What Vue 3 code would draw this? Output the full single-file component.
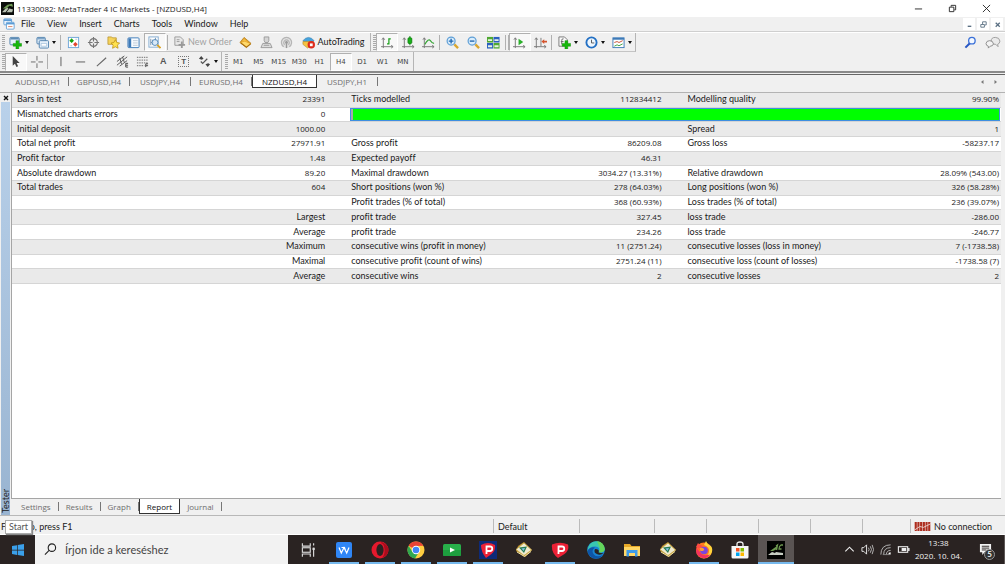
<script setup>
const glyphs = {
  app: '<rect width="14" height="14" fill="#0b0d0b"/><path d="M1 11 6 6 8 7 5 11zM6 11 9 7 13 8 12 11z" fill="#b9c2b4"/><path d="M2 7 7 3 12 2 13 5 9 4 6 7z" fill="#6f9a55"/>',
  doc: '<rect x="1" y="1" width="9" height="7" rx="1" fill="#e9f3fc" stroke="#5b9bd5"/><path d="M1 2.500H10" stroke="#5b9bd5" stroke-width="2"/><rect x="4" y="5" width="9" height="8" rx="1" fill="#fff" stroke="#5b9bd5"/><path d="M4 6.500H13" stroke="#5b9bd5" stroke-width="2"/><path d="M6 10h5" stroke="#d57a5b"/>',
  newChart: '<rect x="1" y="1.500" width="10" height="8" rx="1" fill="#e6f1fb" stroke="#4f81ad"/><path d="M1.500 3H10.500" stroke="#4f81ad" stroke-width="1.500"/><path d="M7.500 5h3v3h3v3h-3v3h-3v-3h-3V8h3z" fill="#16b80b" stroke="#0a8c05" stroke-width=".5"/>',
  profiles: '<rect x="1" y="1.500" width="9" height="7" rx="1" fill="#dcebf8" stroke="#4f81ad"/><path d="M1.500 3H9.500" stroke="#4f81ad"/><rect x="3.500" y="5" width="10" height="8" rx="1" fill="#e6f1fb" stroke="#4f81ad"/><path d="M5.500 8h6V11h-6z" fill="#fff" stroke="#8fb3d3" stroke-width=".7"/>',
  market: '<rect x="1.500" y="1.500" width="11" height="11" fill="#fff" stroke="#6ea6d8"/><path d="M2.500 5 5 2.500l2.500 2.500L5 7.500z" fill="#12a30c"/><path d="M6.500 9 9 6.500 11.500 9 9 11.500z" fill="#e2462e"/><path d="M9 3.500h2M3.500 10.500h2" stroke="#b9c7d2"/>',
  target: '<circle cx="7" cy="7" r="4.200" fill="none" stroke="#777" stroke-width="1.200"/><path d="M7 1V6M7 8v5M1 7h5M8 7h5" stroke="#777" stroke-width="1.200"/>',
  folderStar: '<path d="M1 3V1h4l1 1h4v7H1z" fill="#f5d35c" stroke="#b7912a" stroke-width=".8"/><path d="m9 4 1.600 3 3 .5-2.300 2.300.6 3.400L9 11.600 6 13.200l.6-3.400L4.400 7.500l3-.5z" fill="#ffe14d" stroke="#b98c12" stroke-width=".8"/>',
  navigator: '<rect x="1" y="2" width="12" height="10.500" rx="1" fill="#f7fbff" stroke="#3d7ab8"/><rect x="1.500" y="2.500" width="3" height="9.500" fill="#3d7ab8"/><path d="M6.500 5h5M6.500 7.500h5M6.500 10h5" stroke="#b9c6d4"/>',
  tester: '<rect x="1" y="1" width="10" height="11" fill="#fff" stroke="#7fa8cf"/><path d="M3 3v7M5 4v5M3 7h3M8 2v3" stroke="#7590ab"/><circle cx="7.500" cy="7" r="3.200" fill="#cfe4f6" fill-opacity=".8" stroke="#5289bb"/><path d="m10 9.500 3.500 3.500" stroke="#dba123" stroke-width="2"/>',
  order: '<path d="M2 1h6l3 3v6H2z" fill="#e8e8e8" stroke="#999"/><path d="M4 4h3M4 6h3" stroke="#999"/><path d="M8.500 6h2v2.500H13v2h-2.500V13h-2v-2.500H6v-2h2.500z" fill="#999"/>',
  gold: '<path d="M1 7 5.500 1.500 13 8 8 12.500z" fill="#e3a228" stroke="#b27912" stroke-width=".8"/><path d="M1.500 7.500 6 6l6.500 2.500-4.500 3.500z" fill="#ffd96b"/><path d="m2 7.500 6 4.500 4.500-3.500" fill="none" stroke="#a86c0c" stroke-width="1.200"/><path d="M3 6 5.500 3 10 7 6 5.500z" fill="#f3bd45"/>',
  stamp: '<path d="M4.500 1h5v4l-1 2h-3l-1-2z" fill="#d5d5d5" stroke="#999"/><path d="M1 12.500 3 8h8l2 4.500z" fill="#ddd" stroke="#999"/><path d="M4 10h6" stroke="#999"/>',
  signal: '<circle cx="7" cy="7" r="6" fill="#e2e2e2"/><path d="M4 11.500a5.500 5.500 0 1 1 6 0M5 9.500a3 3 0 1 1 4 0" fill="none" stroke="#b5b5b5" stroke-width="1.300"/><circle cx="7" cy="7" r="1.500" fill="#999"/><path d="M7 8v5" stroke="#999" stroke-width="1.500"/>',
  auto: '<path d="M1 5q6-7 12 0l-2 2H3z" fill="#46a3dc" stroke="#2a78ae" stroke-width=".6"/><path d="M1 6h11v3l-6 4-5-4z" fill="#f5c342" stroke="#b4841d" stroke-width=".6"/><circle cx="10" cy="9.500" r="4" fill="#dd2b1c"/><rect x="8.500" y="8" width="3" height="3" fill="#fff"/>',
  bars: '<path d="M2.500 2v11M0 11.500h13" stroke="#777"/><path d="m1 4 1.500-2L4 4M11 10l2 1.500L11 13" fill="none" stroke="#777"/><path d="M6.500 8.500H8.500V3h2" fill="none" stroke="#18a018" stroke-width="1.300"/>',
  candle: '<path d="M2.500 2v11M0 11.500h13" stroke="#777"/><path d="m1 4 1.500-2L4 4M11 10l2 1.500L11 13" fill="none" stroke="#777"/><path d="M8.500 0v10" stroke="#0d850d"/><rect x="6.500" y="2" width="4" height="6" rx="1" fill="#17b117" stroke="#0d850d"/>',
  line: '<path d="M2.500 2v11M0 11.500h13" stroke="#777"/><path d="m1 4 1.500-2L4 4M11 10l2 1.500L11 13" fill="none" stroke="#777"/><path d="M3 9Q7 2 9 5t4 3" fill="none" stroke="#36a536" stroke-width="1.200"/>',
  zoomIn: '<path d="m9 9 4 4" stroke="#d9a62e" stroke-width="2.500"/><circle cx="5.500" cy="5.500" r="4.300" fill="#d9edfc" stroke="#5f9fd6" stroke-width="1.300"/><path d="M3 5.500h5M5.500 3v5" stroke="#2269b1" stroke-width="1.500"/>',
  zoomOut: '<path d="m9 9 4 4" stroke="#d9a62e" stroke-width="2.500"/><circle cx="5.500" cy="5.500" r="4.300" fill="#d9edfc" stroke="#5f9fd6" stroke-width="1.300"/><path d="M3 5.500h5" stroke="#2269b1" stroke-width="1.500"/>',
  tile: '<rect x="0" y="1" width="6.500" height="6" fill="#4fa832"/><rect x="7" y="1" width="6.500" height="6" fill="#2a5fc0"/><rect x="0" y="7.500" width="6.500" height="6" fill="#2a5fc0"/><rect x="7" y="7.500" width="6.500" height="6" fill="#4fa832"/><path d="M1 4.500h4.500M8 4.500h4.500M1 11h4.500M8 11h4.500" stroke="#e6f3e2" stroke-width="2"/>',
  scroll: '<path d="M2.500 2v11M0 11.500h13" stroke="#777"/><path d="m1 4 1.500-2L4 4M11 10l2 1.500L11 13" fill="none" stroke="#777"/><path d="m6 3 5 3.500L6 10z" fill="#2bb02b"/>',
  shift: '<path d="M2.500 2v11M0 11.500h13M7.500 2v9" stroke="#777"/><path d="m1 4 1.500-2L4 4M11 10l2 1.500L11 13" fill="none" stroke="#777"/><path d="m8 6 3-2.500V5h3v2h-3v1.500z" fill="#d4532c"/>',
  indicator: '<path d="M1 1h6l3 3v7H1z" fill="#fafafa" stroke="#777"/><path d="M6 3q-2-.5-2 2v4M3 6h3" fill="none" stroke="#666"/><path d="M7.500 5h3v3h3v3h-3v3h-3v-3h-3V8h3z" fill="#16b80b" stroke="#0a8c05" stroke-width=".5"/>',
  clock: '<circle cx="7" cy="7" r="5.500" fill="#eef6fd" stroke="#2370c4" stroke-width="2"/><path d="M7 4v3.500h3" fill="none" stroke="#555"/>',
  template: '<rect x="1" y="2" width="12" height="10.500" fill="#fff" stroke="#3d7ab8"/><path d="M1 3h12" stroke="#3d7ab8" stroke-width="2"/><path d="m2.500 7 3-1 2 1 4-2" fill="none" stroke="#c84b31"/><path d="m2.500 11 3-1.500 2 1 4-2" fill="none" stroke="#3ba03b"/>',
  cursor: '<path d="M4 1v10.500l2.400-2.200L8 13l1.800-.8L8.200 8.700h3.300z" fill="#444"/>',
  cross: '<path d="M7.500 1v5M7.500 9v5M1 7.500h5M9 7.500h5" stroke="#666"/>',
  vline: '<path d="M7.500 2v10" stroke="#555"/>',
  hline: '<path d="M2 7.500h10" stroke="#555"/>',
  trend: '<path d="M2 12 12 3" stroke="#666" stroke-width="1.200"/>',
  channel: '<path d="M1 7 9 1M1 11 12 2M4 12l8-6" stroke="#555"/><path d="m4 3 2 7M7 2l2 6" stroke="#555"/><path d="M13 9h-2.500v4H13M10.500 11H13" fill="none" stroke="#444"/>',
  fibo: '<path d="M1 2.500h12M1 5.500h12M1 8.500h12M1 11.500h8" stroke="#666" stroke-dasharray="1.500 1"/><path d="M13 9.500h-2.500V13M10.500 11.500H13" fill="none" stroke="#444"/>',
  arrows: '<path d="M1 4 3.500 1 6 4 4 5zM8 10l2.500 3L13 10l-2-1z" fill="#444"/><path d="m3 7 2 2 5-5" fill="none" stroke="#555" stroke-width="1.300"/>',
  search: '<circle cx="8.500" cy="5" r="3.500" fill="#f3f8ff" stroke="#3a70d8" stroke-width="1.400"/><path d="M6 8 1.500 12.500" stroke="#2857c4" stroke-width="2.200"/>',
  chat: '<path d="M6 5.500Q6 1.500 10.500 1.500T15.500 5.500Q15 8.500 13 9l.5 2.500L11 9Q6 9 6 5.500z" fill="#eaeaea" stroke="#999"/><path d="M.5 8Q1 5 4.500 5T8.500 8.500Q8 11 5 11l-2 2V11Q.5 10.500.5 8z" fill="#f3f3f3" stroke="#888"/>',
  taskview: '<path d="M2 1v2.500h7V1M2 13v-2.500h7V13" fill="none" stroke="#ddd"/><rect x="2" y="5" width="7" height="4" fill="none" stroke="#ddd"/><path d="M12 1v2M12 5v8" stroke="#ddd"/><path d="M11 6h2" stroke="#ddd" stroke-width="2"/>',
  wps: '<rect x="1" y="1" width="16" height="16" rx="2" fill="#2f86f6"/><path d="m4 6.500 2.300 5.500L9 6.500l2.700 5.500L14 6.500M6.500 6.500h3l1 3" fill="none" stroke="#fff" stroke-width="1.200"/>',
  opera: '<ellipse cx="9" cy="9" rx="8.500" ry="8.500" fill="#e5192d"/><path d="M11 1Q17.500 4 17.500 9T11 17Q14 14 13.500 8T9.500 2z" fill="#a90d1d"/><ellipse cx="9" cy="9" rx="3.600" ry="6" fill="#2a2322"/>',
  chrome: '<circle cx="9" cy="9" r="8.500" fill="#ffcd40"/><path d="M9 9 1.600 4.700A8.500 8.500 0 0 1 16.400 4.700L9 5z" fill="#ea4335"/><path d="M9 9 5.500 11 1.600 4.700A8.500 8.500 0 0 0 8 17.400L12 11z" fill="#2fa84f"/><circle cx="9" cy="9" r="4.200" fill="#fff"/><circle cx="9" cy="9" r="3.300" fill="#4285f4"/>',
  play: '<rect y="3" width="18" height="12" rx="1.500" fill="#28b04a"/><path d="M0 9h18v4.500q0 1.500-1.500 1.500h-15Q0 15 0 13.500z" fill="#1d9e3e"/><path d="m7 6.500 5 2.500-5 2.500z" fill="#fff"/>',
  pBlue: '<rect width="18" height="18" fill="#0d2a78"/><path d="M2 4Q9 0 16 4 17 9 12.500 13L7 17Q2 11 2 4z" fill="#ec2136"/><path d="M7.500 13V5.500H11a2 2 0 0 1 0 4.500H7.500" fill="none" stroke="#fff" stroke-width="1.800"/>',
  pRed: '<path d="M1 3.500Q9 0 17 3.500 18.500 9 13.500 13L7 17Q0 12 1 3.500z" fill="#ec2136"/><path d="M7.500 13V5.500H11a2 2 0 0 1 0 4.500H7.500" fill="none" stroke="#fff" stroke-width="1.800"/>',
  trader: '<path d="M1 10 3 5 9 1l8 8-7 7z" fill="#b98d2c"/><path d="M1 8.500 9 2l7.500 7L9 14.500z" fill="#f0ebd0" stroke="#c9a94a" stroke-width=".8"/><path d="m4 6.500 8-1L9 12z" fill="#277c52"/><path d="m6.500 7.500 3.500-.5L8.500 10z" fill="#83c3e8"/><path d="m2 11 7.500 4.500 6.500-5" fill="none" stroke="#f3e6a5"/>',
  edge: '<circle cx="9" cy="9" r="8.800" fill="#1883d1"/><path d="M1 7Q3 0 9.500.2T17.800 8.500Q17 12 12 11.500 13.500 6 8.500 5.500 3 5 .5 10z" fill="#39c7b0"/><path d="M10 0q7 1 7.800 8Q17 12 12 11.500L13 7z" fill="#65d65b"/><path d="M8 6.500Q4 9 6.500 13T16 14Q12 19 6 17 0 14 1 9 3 5.500 8 6.500z" fill="#0d55a7"/><path d="M8 8q-2 4 3 5.500 3 .5 5.500-1l-5-1Q13 8 8 8z" fill="#2a2322"/>',
  explorer: '<path d="M1 3h6l1.500 2H17v10H1z" fill="#e7a928"/><path d="M1 6h16v9H1z" fill="#ffd766"/><path d="M3.500 9h11v6.500H12V12H6v3.500H3.500z" fill="#3d9be9"/>',
  firefox: '<circle cx="9" cy="9.500" r="8" fill="#ff7a1f"/><path d="M11 0q1 3 4 4.500T17 11Q14 18 7 17q6-1 7-6T9 4z" fill="#ffd43b"/><path d="M1 6 3 2q1 2 4 2.500L9 8 5 9z" fill="#ff4b44"/><path d="M1.500 7Q0 14 6 16.500t9-3Q8 16 5 11z" fill="#f3315f"/><circle cx="9" cy="9.500" r="3.800" fill="#7b46dd"/><path d="M4.500 7Q8 6 9 8T5.500 10z" fill="#ff9d2f"/>',
  store: '<path d="M6 6V3q0-2 3-2t3 2v3" fill="none" stroke="#eee" stroke-width="1.300"/><path d="M.5 5h17v11q0 1.500-1.500 1.500H2Q.5 17.500.5 16z" fill="#f6f6f6"/><path d="M5 7h3.500v3.500H5z" fill="#f25022"/><path d="M9.500 7H13v3.500H9.500z" fill="#7fba00"/><path d="M5 11.500h3.500V15H5z" fill="#00a4ef"/><path d="M9.500 11.500H13V15H9.500z" fill="#ffb900"/>',
  ic: '<rect width="18" height="18" fill="#020302"/><path d="m1 14 4-3 3 1-2 2zM6 14l3-3 7 1v2z" fill="#c8cec4"/><path d="m3 10 7-5 0 3-4 2z" fill="#6c974f"/><path d="m9 5 1.500-1L9.500 9M16 4h-2q-2 1-2 4h2.500" fill="none" stroke="#6c974f" stroke-width="1.300"/>',
  chevron: '<path d="m2.500 9 4.500-4.500L11.500 9" fill="none" stroke="#eee" stroke-width="1.200"/>',
  speaker: '<path d="M1 5h2l3-3v10L3 9H1z" fill="none" stroke="#eee"/><path d="M8 5q1.500 2 0 4M10 3.500q2.500 3.500 0 7M12 2q3 5 0 10" fill="none" stroke="#ccc" stroke-width=".9"/>',
  wifi: '<path d="M2 12.500Q2 2 12.500 2M5 12.500Q5 5 12.500 5M8 12.500Q8 8 12.500 8" fill="none" stroke="#bbb"/><path d="M10 12.500Q10 10 12.500 10v2.500z" fill="#fff"/><path d="M4 12.500h8" stroke="#888"/>',
  battery: '<rect x="1.500" y="4" width="10" height="6" fill="none" stroke="#eee" stroke-width="1.200"/><path d="M12 5.500h1.500v3H12zM5 5.500h5v3H5z" fill="#eee"/>',
}
const viewTools = ['market', 'target', 'folderStar', 'navigator', 'tester']
const viewNames = ['Market Watch', 'Data Window', 'Favorites', 'Navigator', 'Strategy Tester']
const serviceTools = [['gold', 'MetaEditor'], ['stamp', 'Experts'], ['signal', 'Signals']]
const chartTypes = [['bars', 'Bar chart'], ['candle', 'Candlesticks'], ['line', 'Line chart']]
const zoomTools = [['zoomIn', 'Zoom in'], ['zoomOut', 'Zoom out'], ['tile', 'Tile windows']]
const scrollTools = [['scroll', 'Auto scroll'], ['shift', 'Chart shift']]
const addTools = [['indicator', 'Indicators'], ['clock', 'Periods'], ['template', 'Templates']]
const drawTools = [['vline', 'Vertical line'], ['hline', 'Horizontal line'], ['trend', 'Trendline'], ['channel', 'Channel'], ['fibo', 'Fibonacci'], ['A', 'Text'], ['T', 'Text label']]
const menus = ['File', 'View', 'Insert', 'Charts', 'Tools', 'Window', 'Help']
const frames = ['M1', 'M5', 'M15', 'M30', 'H1', 'H4', 'D1', 'W1', 'MN']
const charts = ['AUDUSD,H1', 'GBPUSD,H4', 'USDJPY,H4', 'EURUSD,H4', 'NZDUSD,H4', 'USDJPY,H1']
const tabs = ['Settings', 'Results', 'Graph', 'Report', 'Journal']
const rows = [
  ['Bars in test', '23391', 'Ticks modelled', '112834412', 'Modelling quality', '99.90%'],
  ['Mismatched charts errors', '0', null],
  ['Initial deposit', '1000.00', '', '', 'Spread', '1'],
  ['Total net profit', '27971.91', 'Gross profit', '86209.08', 'Gross loss', '-58237.17'],
  ['Profit factor', '1.48', 'Expected payoff', '46.31', '', ''],
  ['Absolute drawdown', '89.20', 'Maximal drawdown', '3034.27 (13.31%)', 'Relative drawdown', '28.09% (543.00)'],
  ['Total trades', '604', 'Short positions (won %)', '278 (64.03%)', 'Long positions (won %)', '326 (58.28%)'],
  ['', '', 'Profit trades (% of total)', '368 (60.93%)', 'Loss trades (% of total)', '236 (39.07%)'],
  ['', 'Largest', 'profit trade', '327.45', 'loss trade', '-286.00'],
  ['', 'Average', 'profit trade', '234.26', 'loss trade', '-246.77'],
  ['', 'Maximum', 'consecutive wins (profit in money)', '11 (2751.24)', 'consecutive losses (loss in money)', '7 (-1738.58)'],
  ['', 'Maximal', 'consecutive profit (count of wins)', '2751.24 (11)', 'consecutive loss (count of losses)', '-1738.58 (7)'],
  ['', 'Average', 'consecutive wins', '2', 'consecutive losses', '2'],
]
const apps = [
  ['taskview', 'Task view', ''], ['wps', 'WPS Office', 'open'], ['opera', 'Opera', 'open'], ['chrome', 'Chrome', 'open'],
  ['play', 'Video', 'open'], ['pBlue', 'P app', 'open'], ['trader', 'MetaTrader', ''], ['pRed', 'P app', 'open'],
  ['edge', 'Edge', ''], ['explorer', 'File Explorer', ''], ['trader', 'MetaTrader', ''], ['firefox', 'Firefox', 'open'],
  ['store', 'Store', ''], ['ic', 'IC Markets', 'open current'],
]
</script>

<template>
  <div class="desktop">
    <header class="title">
      <svg class="icon" viewBox="0 0 14 14" v-html="glyphs.app"></svg>
      <h1>11330082: MetaTrader 4 IC Markets - [NZDUSD,H4]</h1>
      <div class="win-buttons">
        <button aria-label="Minimize"><svg viewBox="0 0 10 10"><path d="M1 5.500h8" stroke="#222" /></svg></button>
        <button aria-label="Restore"><svg viewBox="0 0 10 10"><path d="M1.500 3.500h5v5h-5zM3.500 3V1.500h5v5H7" fill="none" stroke="#222" /></svg></button>
        <button aria-label="Close"><svg viewBox="0 0 10 10"><path d="m1 1 8 8M9 1 1 9" stroke="#222" /></svg></button>
      </div>
    </header>

    <nav class="menu">
      <svg class="icon" viewBox="0 0 14 14" v-html="glyphs.doc"></svg>
      <button v-for="m in menus" :key="m">{{ m }}</button>
      <div class="mdi">
        <button aria-label="Minimize chart"><svg viewBox="0 0 10 10"><path d="M3 7h4" stroke="#5b7083" stroke-width="1.500" /></svg></button>
        <button aria-label="Restore chart"><svg viewBox="0 0 10 10"><path d="M2 5h4v3H2zM4 4.500V2h4v3.500H6.500" fill="none" stroke="#5b7083" /></svg></button>
        <button aria-label="Close chart"><svg viewBox="0 0 10 10"><path d="m3 3 4.500 4.500M7.500 3 3 7.500" stroke="#5b7083" stroke-width="1.400" /></svg></button>
      </div>
    </nav>

    <div class="bars">
      <div class="bar first">
        <div class="panel">
          <i class="grip"></i>
          <button class="split" aria-label="New chart"><svg class="icon" viewBox="0 0 14 14" v-html="glyphs.newChart"></svg><i class="caret"></i></button>
          <button class="split" aria-label="Profiles"><svg class="icon" viewBox="0 0 14 14" v-html="glyphs.profiles"></svg><i class="caret"></i></button>
          <i class="sep"></i>
          <div class="group five">
            <button v-for="(t, i) in viewTools" :key="t" :class="{ pressed: i === 4 }" :aria-label="viewNames[i]"><svg class="icon" viewBox="0 0 14 14" v-html="glyphs[t]"></svg></button>
          </div>
          <i class="sep"></i>
          <button class="wide off"><svg class="icon" viewBox="0 0 14 14" v-html="glyphs.order"></svg>New Order</button>
          <div class="group three">
            <button v-for="t in serviceTools" :key="t[0]" :aria-label="t[1]"><svg class="icon" viewBox="0 0 14 14" v-html="glyphs[t[0]]"></svg></button>
          </div>
          <button class="wide auto"><svg class="icon" viewBox="0 0 14 14" v-html="glyphs.auto"></svg>AutoTrading</button>
        </div>
        <div class="panel">
          <i class="grip"></i>
          <div class="group three">
            <button v-for="(t, i) in chartTypes" :key="t[0]" :class="{ pressed: i === 0 }" :aria-label="t[1]"><svg class="icon" viewBox="0 0 14 14" v-html="glyphs[t[0]]"></svg></button>
          </div>
          <i class="sep"></i>
          <div class="group three">
            <button v-for="t in zoomTools" :key="t[0]" :aria-label="t[1]"><svg class="icon" viewBox="0 0 14 14" v-html="glyphs[t[0]]"></svg></button>
          </div>
          <i class="sep"></i>
          <i class="rule"></i>
          <div class="group two">
            <button v-for="(t, i) in scrollTools" :key="t[0]" :class="{ pressed: i === 0 }" :aria-label="t[1]"><svg class="icon" viewBox="0 0 14 14" v-html="glyphs[t[0]]"></svg></button>
          </div>
          <i class="sep"></i>
          <button v-for="t in addTools" :key="t[0]" class="split" :aria-label="t[1]"><svg class="icon" viewBox="0 0 14 14" v-html="glyphs[t[0]]"></svg><i class="caret"></i></button>
        </div>
        <div class="extras">
          <button aria-label="Search"><svg class="icon" viewBox="0 0 14 14" v-html="glyphs.search"></svg></button>
          <button aria-label="Chat"><svg class="icon chat" viewBox="0 0 16 14" v-html="glyphs.chat"></svg></button>
        </div>
      </div>
      <div class="bar second">
        <div class="panel">
          <i class="grip"></i>
          <div class="group two">
            <button class="pressed" aria-label="Cursor"><svg class="icon" viewBox="0 0 14 14" v-html="glyphs.cursor"></svg></button>
            <button aria-label="Crosshair"><svg class="icon" viewBox="0 0 14 14" v-html="glyphs.cross"></svg></button>
          </div>
          <i class="sep"></i>
          <div class="group seven">
            <button v-for="t in drawTools" :key="t[0]" :aria-label="t[1]">
              <svg v-if="glyphs[t[0]]" class="icon" viewBox="0 0 14 14" v-html="glyphs[t[0]]"></svg>
              <span v-else :class="['letter', { boxed: t[0] === 'T' }]">{{ t[0] }}</span>
            </button>
          </div>
          <button class="split" aria-label="Arrows"><svg class="icon" viewBox="0 0 14 14" v-html="glyphs.arrows"></svg><i class="caret"></i></button>
        </div>
        <div class="panel">
          <i class="grip"></i>
          <div class="group frames">
            <button v-for="f in frames" :key="f" :class="{ pressed: f === 'H4' }">{{ f }}</button>
          </div>
        </div>
      </div>
    </div>

    <div class="charts">
      <button v-for="c in charts" :key="c" :class="{ active: c === 'NZDUSD,H4' }"><span>{{ c }}</span></button>
      <div class="pager">
        <button aria-label="Previous charts"><svg viewBox="0 0 6 6"><path d="M4.500 1v4L2 3z" fill="#777" /></svg></button>
        <button aria-label="Next charts"><svg viewBox="0 0 6 6"><path d="M1.500 1v4L4 3z" fill="#777" /></svg></button>
      </div>
    </div>

    <main class="tester">
      <aside>
        <button class="close" aria-label="Close tester"><svg viewBox="0 0 6 6"><path d="m1 1 4 4M5 1 1 5" stroke="#111" stroke-width="1.400" /></svg></button>
        <div class="caption"><span>Tester</span></div>
      </aside>
      <section>
        <div class="report">
          <table>
            <colgroup>
              <col class="c1"><col class="c2"><col class="c3"><col class="c4"><col class="c5"><col class="c6">
            </colgroup>
            <tbody>
              <tr v-for="(r, i) in rows" :key="i">
                <template v-if="r[2] === null">
                  <td>{{ r[0] }}</td><td class="num">{{ r[1] }}</td>
                  <td colspan="4" class="quality"><div class="meter"></div></td>
                </template>
                <template v-else>
                  <td v-for="(c, j) in r" :key="j" :class="{ num: /\d/.test(c) }">{{ c }}</td>
                </template>
              </tr>
            </tbody>
          </table>
        </div>
        <div class="tabs">
          <button v-for="t in tabs" :key="t" :class="{ active: t === 'Report' }"><span>{{ t }}</span></button>
        </div>
      </section>
    </main>

    <footer class="status">
      <span class="help">For Help, press F1</span>
      <span class="profile">Default</span>
      <span class="w75"></span><span class="w52"></span><span class="w52"></span><span class="w52"></span><span class="w52"></span><span class="w48"></span>
      <span class="net">
        <svg viewBox="0 0 18 10"><path d="M1.500 0v10M4.500 0v10M7.500 0v10M10.500 0v10M13.500 0v10M16.500 0v10" stroke="#ad2c1d" stroke-width="2.400" /><path d="M0 9 6 5l4 1 8-4" fill="none" stroke="#f0d8d2" /></svg>
        No connection
      </span>
      <div class="tip" role="tooltip">Start</div>
    </footer>

    <div class="taskbar">
      <button class="start" aria-label="Start"><svg viewBox="0 0 12 12"><path d="m0 2 5-.8v4.500H0zM5.700 1 12 0v5.700H5.700zM0 6.400h5v4.500L0 10zM5.700 6.400H12V12l-6.300-1z" fill="#3ba0ea" /></svg></button>
      <label class="find">
        <svg viewBox="0 0 14 14"><circle cx="8.500" cy="5" r="4" fill="none" stroke="#222" stroke-width="1.200" /><path d="m5.500 8-4.500 4.500" stroke="#222" stroke-width="1.200" /></svg>
        <input type="text" placeholder="Írjon ide a kereséshez" aria-label="Írjon ide a kereséshez">
      </label>
      <div class="apps">
        <button v-for="(a, i) in apps" :key="i" :class="a[2]" :aria-label="a[1]"><svg :viewBox="a[0] === 'taskview' ? '-1 -1 16 16' : '0 0 18 18'" v-html="glyphs[a[0]]"></svg></button>
      </div>
      <div class="tray">
        <button aria-label="Hidden icons"><svg viewBox="0 0 14 14" v-html="glyphs.chevron"></svg></button>
        <button aria-label="Volume"><svg viewBox="0 0 14 14" v-html="glyphs.speaker"></svg></button>
        <button aria-label="Network"><svg viewBox="0 0 14 14" v-html="glyphs.wifi"></svg></button>
        <button aria-label="Battery"><svg viewBox="0 0 14 14" v-html="glyphs.battery"></svg></button>
        <time><span>13:38</span><span>2020. 10. 04.</span></time>
        <button class="notes" aria-label="Notifications">
          <svg viewBox="0 0 14 14"><path d="M1 1h12v9H6l-2.500 3V10H1z" fill="#f3f3f3" /><path d="M3 3.500h8M3 5.500h8M3 7.500h5" stroke="#2a2322" /></svg>
          <b>5</b>
        </button>
      </div>
    </div>
  </div>
</template>

<style>
body {
  margin: 0;
}
</style>

<style scoped>
.desktop {
  display: flex;
  flex-direction: column;
  min-height: 100vh;
  background: #f0f0f0;
  color: #1a1a1a;
  font: 9px/12px Lato, "Open Sans", sans-serif;
  font-variant-ligatures: none;
}
.desktop *, .desktop *::before {
  box-sizing: border-box;
}
button {
  display: flex;
  align-items: center;
  justify-content: center;
  margin: 0;
  padding: 0;
  border: 0;
  background: none;
  color: inherit;
  font: inherit;
  white-space: nowrap;
}
svg {
  display: block;
  flex: none;
}
.icon {
  width: 13px;
  height: 13px;
}
.title {
  display: flex;
  align-items: center;
  gap: 3px;
  height: 17px;
  padding-left: 1px;
  background: #fff;
}
.title h1 {
  margin: 0;
  font: 8px/12px "Open Sans", sans-serif;
}
.win-buttons {
  display: flex;
  margin-left: auto;
  padding-right: 2px;
}
.win-buttons button {
  width: 34px;
  height: 15px;
}
.win-buttons svg, .mdi svg {
  width: 9px;
  height: 9px;
}
.menu {
  display: flex;
  align-items: center;
  height: 15px;
  padding-left: 3px;
  border-bottom: 1px solid #cfcfcf;
}
.menu > button {
  padding: 0 6px;
}
.menu .icon {
  width: 12px;
  height: 12px;
}
.mdi {
  display: flex;
  gap: 2px;
  margin-left: auto;
  padding-right: 2px;
}
.mdi button {
  width: 12px;
  height: 12px;
  background: #fff;
}
.bars {
  border-top: 1px solid #fff;
  border-bottom: 2px solid #8a8a8a;
}
.bar, .panel, .group, .extras {
  display: flex;
}
.bar {
  height: 19px;
}
.panel {
  align-items: center;
  border-right: 1px solid #b5b5b5;
}
.first .panel {
  border-bottom: 1px solid #c4c4c4;
}
.second .panel {
  margin-right: 1px;
}
.grip {
  width: 3px;
  height: 15px;
  margin: 0 0 0 2px;
  background: repeating-linear-gradient(#a9a9a9 0 1px, #f0f0f0 1px 2px);
}
.sep {
  width: 1px;
  height: 15px;
  margin: 0 2px 0 1px;
  background: #b0b0b0;
}
.rule {
  width: 1px;
  height: 15px;
  background: #b0b0b0;
}
.split {
  width: 27px;
  height: 18px;
  gap: 3px;
}
.caret {
  border: 2px solid transparent;
  border-top: 3px solid #111;
  border-bottom: 0;
}
.group button {
  flex: 1;
  height: 18px;
}
.group .pressed {
  border: 1px solid;
  border-color: #b0b0b0 #fff #fff #b0b0b0;
  background: #f8f8f8;
}
.two {
  width: 41px;
}
.three {
  width: 62px;
}
.five {
  width: 103px;
}
.seven {
  width: 144px;
}
.frames {
  width: 185px;
  color: #444;
  font: 7px/12px "DejaVu Sans", sans-serif;
}
.wide {
  gap: 2px;
  width: 65px;
  height: 18px;
}
.auto {
  width: 73px;
}
.off {
  color: #a0a0a0;
}
.letter {
  color: #555;
  font: bold 9px/9px "Liberation Sans", sans-serif;
}
.boxed {
  padding: 0 2px;
  border: 1px dotted #777;
  font-size: 8px;
}
.extras {
  align-items: center;
  gap: 8px;
  margin-left: auto;
  padding-right: 4px;
}
.chat {
  width: 16px;
}
.charts, .tabs {
  display: flex;
  color: #6e6e6e;
  font: 8px/12px "Open Sans", sans-serif;
}
.charts {
  height: 19px;
  margin-top: 1px;
  padding: 0 3px 4px 8px;
  border-top: 1px solid #666;
  border-bottom: 1px solid #b3b3b3;
}
.charts > button {
  width: 61px;
}
.charts > button span, .tabs > button span {
  flex: 1;
  border-right: 1px solid #777;
  line-height: 9px;
}
.charts > .active, .tabs > .active {
  border: 1px solid #333;
  border-top: 0;
  background: #fff;
  color: #111;
}
.charts > .active {
  width: 65px;
}
.charts > .active span, .tabs > .active span {
  border: 0;
}
.pager {
  display: flex;
  gap: 8px;
  margin-left: auto;
  padding-right: 3px;
}
.pager svg, .close svg {
  width: 6px;
  height: 6px;
}
.tester {
  display: flex;
  flex: 1;
}
aside {
  display: flex;
  flex-direction: column;
  width: 11px;
  padding: 0 1px;
}
.close {
  height: 9px;
}
.caption {
  display: flex;
  flex: 1;
  align-items: center;
  justify-content: center;
  background: linear-gradient(#b9d1ea, #99b4d1);
}
.caption span {
  margin-top: auto;
  padding: 2px 0;
  font-size: 9px;
  line-height: 9px;
  writing-mode: vertical-rl;
  transform: rotate(180deg);
}
section {
  display: flex;
  flex: 1;
  flex-direction: column;
  padding-right: 4px;
}
.report {
  flex: 1;
  border: 1px solid #a5a5a5;
  border-width: 0 0 1px 1px;
  background: #fff;
}
table {
  width: 100%;
  height: 191px;
  border-collapse: collapse;
  table-layout: fixed;
}
.c1 {
  width: 20%;
}
.c2 {
  width: 14%;
}
.c3 {
  width: 20%;
}
.c4 {
  width: 14%;
}
.c5 {
  width: 20%;
}
.c6 {
  width: 12%;
}
td {
  padding: 0 3px 1px;
  line-height: 12px;
  white-space: nowrap;
}
td:nth-child(1) {
  padding-left: 5px;
}
td:nth-child(even) {
  padding-right: 23px;
  text-align: right;
}
td:nth-child(6) {
  padding-right: 2px;
}
.num:nth-child(even) {
  font: 8px/12px "Open Sans", sans-serif;
}
tr {
  border-bottom: 1px solid #d5d5d5;
}
tr:nth-child(odd) {
  background: #eaeaea;
}
.quality {
  padding: 0 1px 0 2px;
}
.meter {
  height: 13px;
  border: 1px solid #3d8fe0;
  background: linear-gradient(90deg, #a8a8a8 2px, #0f0 2px);
}
.tabs {
  height: 16px;
  padding: 0 0 1px 3px;
}
.tabs > button span {
  padding: 0 7px;
}
.status {
  position: relative;
  display: flex;
  align-items: center;
  height: 20px;
  padding-top: 2px;
  border-top: 1px solid #b8b8b8;
  border-bottom: 1px solid #fff;
}
.status > span {
  height: 14px;
  border-left: 1px solid #bbb;
  line-height: 15px;
}
.status > .help {
  flex: 1;
  border: 0;
  padding-left: 1px;
}
.profile {
  width: 86px;
  padding-left: 4px;
}
.w75 {
  width: 75px;
}
.w52 {
  width: 52px;
}
.w48 {
  width: 48px;
}
.net {
  display: flex;
  align-items: center;
  gap: 3px;
  width: 95px;
  padding-left: 3px;
}
.net svg {
  width: 17px;
  height: 9px;
}
.tip {
  position: absolute;
  bottom: 0;
  left: 5px;
  padding: 0 3px;
  border: 1px solid #aaa;
  background: #fff;
  box-shadow: 1px 1px 1px #888;
  color: #555;
}
.taskbar {
  display: flex;
  height: 29px;
  background: #2a2322;
}
.start {
  width: 35px;
}
.start svg {
  width: 12px;
  height: 12px;
}
.find {
  display: flex;
  align-items: center;
  width: 253px;
  padding-left: 9px;
  gap: 8px;
  background: #f2f2f2;
}
.find svg {
  width: 13px;
  height: 13px;
}
.find input {
  flex: 1;
  min-width: 0;
  padding: 0;
  border: 0;
  background: none;
  font: 11px/16px Lato, "Open Sans", sans-serif;
}
.find input::placeholder {
  color: #444;
}
.apps {
  display: flex;
  padding-left: 2px;
}
.apps button {
  position: relative;
  width: 36px;
}
.apps svg {
  width: 18px;
  height: 18px;
}
.apps .current {
  background: #5a5453;
}
.apps .open::before {
  position: absolute;
  right: 3px;
  bottom: 0;
  left: 3px;
  height: 2px;
  background: #76b9ed;
  content: "";
}
.apps .current::before {
  right: 0;
  left: 0;
}
.tray {
  display: flex;
  align-items: center;
  gap: 5px;
  margin-left: auto;
  color: #f2f2f2;
}
.tray svg {
  width: 13px;
  height: 13px;
}
time {
  display: flex;
  flex-direction: column;
  align-items: center;
  padding-bottom: 2px;
  font: 8px/13px "Open Sans", sans-serif;
}
.notes {
  position: relative;
  width: 38px;
  height: 29px;
  border-right: 1px solid #5d5756;
}
.notes b {
  position: absolute;
  right: 9px;
  bottom: 4px;
  width: 11px;
  height: 11px;
  border: 1px solid #999;
  border-radius: 50%;
  background: #333;
  font-size: 8px;
  line-height: 9px;
  text-align: center;
}
</style>
